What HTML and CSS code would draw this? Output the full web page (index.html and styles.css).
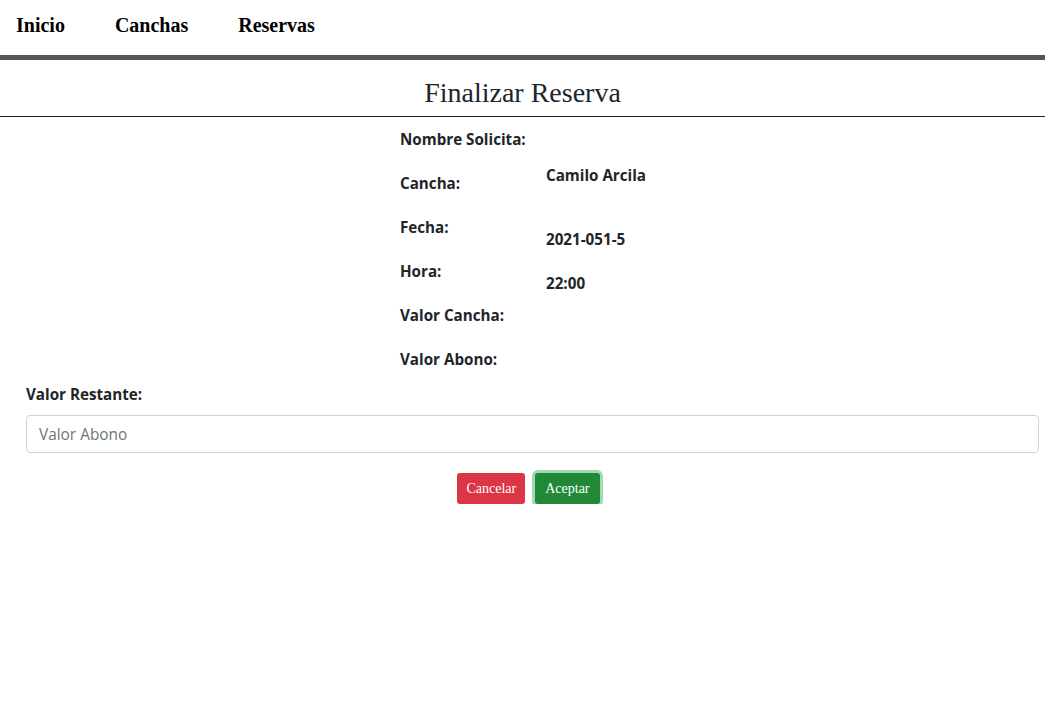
FILE: index.html
```html
<!DOCTYPE html>
<html lang="es">
<head>
<meta charset="utf-8">
<title>Finalizar Reserva</title>
<link rel="stylesheet" href="styles.css">
</head>
<body>
<nav class="nav">
  <a class="nav-link" href="#">Inicio</a>
  <a class="nav-link" href="#">Canchas</a>
  <a class="nav-link" href="#">Reservas</a>
</nav>
<div class="nav-bar"></div>
<h1 class="title">Finalizar Reserva</h1>
<hr class="rule">
<main class="content">
  <div class="details">
    <div class="labels">
      <div class="label">Nombre Solicita:</div>
      <div class="label">Cancha:</div>
      <div class="label">Fecha:</div>
      <div class="label">Hora:</div>
      <div class="label">Valor Cancha:</div>
      <div class="label">Valor Abono:</div>
    </div>
    <div class="values">
      <div class="value v1">Camilo Arcila</div>
      <div class="value v2">2021-051-5</div>
      <div class="value v3">22:00</div>
    </div>
  </div>
  <label class="field-label" for="abono">Valor Restante:</label>
  <input class="field" id="abono" type="text" placeholder="Valor Abono">
  <div class="actions">
    <button class="btn btn-danger" type="button">Cancelar</button>
    <button class="btn btn-success" type="button">Aceptar</button>
  </div>
</main>
</body>
</html>
```
FILE: styles.css
```css
html, body {
  margin: 0;
  padding: 0;
  background: #fff;
}
body {
  font-family: "Liberation Serif", "Times New Roman", serif;
  color: #212529;
}
.nav {
  display: flex;
  height: 55px;
  padding-left: 16px;
  align-items: flex-start;
}
.nav-link {
  font-family: "Liberation Serif", serif;
  font-weight: bold;
  font-size: 20px;
  color: #000;
  text-decoration: none;
  margin-right: 50px;
  line-height: 22px;
  padding-top: 14px;
}
.nav-bar {
  height: 5px;
  background: #555;
}
.title {
  margin: 0;
  text-align: center;
  font-weight: normal;
  font-size: 28px;
  line-height: 34px;
  padding-top: 16px;
  color: #212529;
}
.rule {
  margin: 6px 0 0 0;
  border: 0;
  border-top: 1px solid #212529;
  height: 0;
}
.content {
  font-family: "Open Sans", "Noto Sans", sans-serif;
  padding: 0 6px 0 26px;
}
.details {
  display: flex;
  padding-left: 374px;
  padding-top: 11px;
}
.labels {
  width: 146px;
  display: flex;
  flex-direction: column;
  gap: 22px;
}
.label, .value, .field-label {
  font-weight: bold;
  font-size: 15.2px;
  line-height: 22px;
  color: #212529;
}
.values {
  display: flex;
  flex-direction: column;
}
.v1 { margin-top: 36px; }
.v2 { margin-top: 42px; }
.v3 { margin-top: 22px; }
.field-label {
  display: block;
  margin-top: 13px;
}
.field {
  display: block;
  box-sizing: border-box;
  width: 100%;
  height: 38px;
  margin-top: 10px;
  padding: 6px 12px;
  font-family: "Open Sans", "Noto Sans", sans-serif;
  font-size: 15.4px;
  color: #212529;
  border: 1px solid #ced4da;
  border-radius: 4px;
  outline: none;
}
.field::placeholder {
  color: #6c757d;
}
.actions {
  display: flex;
  justify-content: center;
  gap: 10px;
  margin-top: 20px;
  padding-right: 8px;
}
.btn {
  font-family: "Liberation Serif", serif;
  font-size: 14px;
  color: #fff;
  border: 0;
  border-radius: 3px;
  height: 31px;
  padding: 0 9px;
  cursor: pointer;
}
.btn-danger {
  background: #dc3545;
}
.btn-success {
  background: #218838;
  box-shadow: 0 0 0 3px rgba(72, 180, 97, 0.5);
  padding: 0 10px;
}
```
